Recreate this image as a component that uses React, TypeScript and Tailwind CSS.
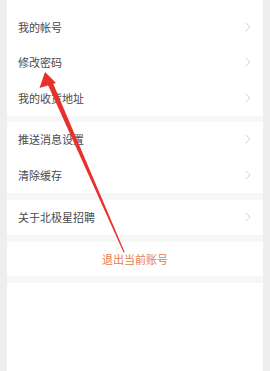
import { ReactNode } from 'react'

function Chevron() {
  return (
    <svg width="6" height="10" viewBox="0 0 6 10" fill="none">
      <path d="M1 1l4 4-4 4" stroke="#d2d2d2" strokeWidth="1" strokeLinecap="round" strokeLinejoin="round" />
    </svg>
  )
}

function Row({ children }: { children: ReactNode }) {
  return (
    <div className="flex h-[35.5px] items-center justify-between pl-[11px] pr-[12px]">
      <span className="text-[11px] text-[#4a4a4a]">{children}</span>
      <Chevron />
    </div>
  )
}

export default function App() {
  return (
    <div
      className="relative h-[371px] w-[270px] overflow-hidden bg-[#eeeeee] px-[7px]"
      style={{ fontFamily: '"Noto Sans CJK SC", "Noto Sans", sans-serif' }}
    >
      <div className="flex h-full flex-col bg-white">
        <div className="h-[9px]" />
        <Row>我的帐号</Row>
        <Row>修改密码</Row>
        <Row>我的收货地址</Row>
        <div className="h-[6px] bg-[#f6f7f7]" />
        <Row>推送消息设置</Row>
        <Row>清除缓存</Row>
        <div className="h-[7px] bg-[#f6f7f7]" />
        <Row>关于北极星招聘</Row>
        <div className="h-[7px] bg-[#f6f7f7]" />
        <div className="flex h-[34px] items-center justify-center">
          <span className="text-[11px] text-[#e47d55]">退出当前账号</span>
        </div>
        <div className="h-[7px] bg-[#f6f7f7]" />
        <div className="flex-1" />
      </div>

      {/* red annotation arrow */}
      <svg className="pointer-events-none absolute left-0 top-0" width="270" height="371" viewBox="0 0 270 371">
        <polygon points="47.5,84 52.5,82 124.6,252 123.6,252.4" fill="#e8302c" />
        <polygon points="45,72 39.5,88 56,83" fill="#e8302c" />
      </svg>
    </div>
  )
}
